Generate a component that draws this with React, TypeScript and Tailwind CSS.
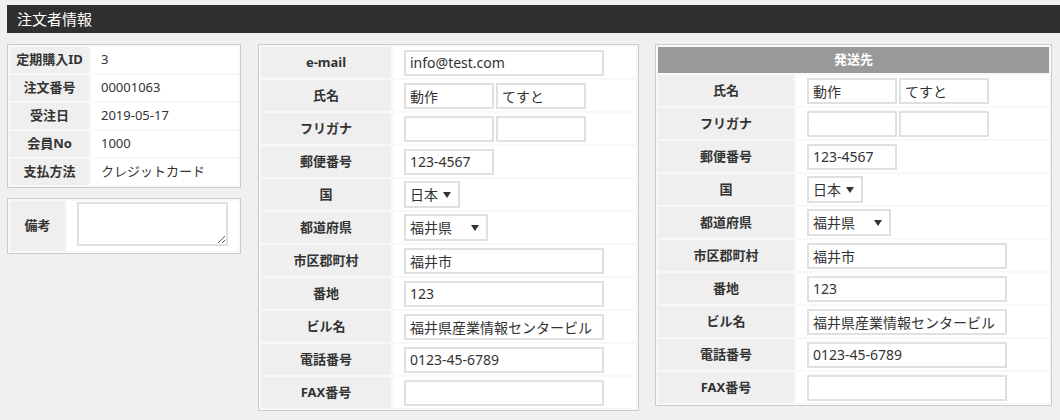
import React from "react";

const F = "font-['Noto_Sans','Noto_Sans_CJK_JP',sans-serif]";

function Inp({ w, v = "" }: { w: string; v?: string }) {
  return (
    <input
      readOnly
      defaultValue={v}
      className={`h-[26px] border-2 border-[#e0e0e0] bg-white px-[4px] text-[14px] text-[#333] outline-none ${F} ${w}`}
    />
  );
}

function Sel({ w, v }: { w: string; v: string }) {
  return (
    <div
      className={`flex h-[27px] items-center justify-between border-2 border-[#e0e0e0] bg-white pl-[4px] pr-[7px] text-[14px] text-[#333] ${w}`}
    >
      <span>{v}</span>
      <svg width="8" height="6" viewBox="0 0 8 6">
        <path d="M0 0 L8 0 L4 6 Z" fill="#333" />
      </svg>
    </div>
  );
}

type Row = { label: string; content: React.ReactNode };

const pair = (a: string, b: string) => (
  <div className="flex gap-[2px]">
    <Inp w="w-[90px]" v={a} />
    <Inp w="w-[90px]" v={b} />
  </div>
);

const baseRows: Row[] = [
  { label: "氏名", content: pair("動作", "てすと") },
  { label: "フリガナ", content: pair("", "") },
  { label: "郵便番号", content: <Inp w="w-[90px]" v="123-4567" /> },
  { label: "国", content: <Sel w="w-[56px]" v="日本" /> },
  { label: "都道府県", content: <Sel w="w-[84px]" v="福井県" /> },
  { label: "市区郡町村", content: <Inp w="w-[200px]" v="福井市" /> },
  { label: "番地", content: <Inp w="w-[200px]" v="123" /> },
  { label: "ビル名", content: <Inp w="w-[200px]" v="福井県産業情報センタービル" /> },
  { label: "電話番号", content: <Inp w="w-[200px]" v="0123-45-6789" /> },
  { label: "FAX番号", content: <Inp w="w-[200px]" v="" /> },
];

const midRows: Row[] = [
  { label: "e-mail", content: <Inp w="w-[200px]" v="info@test.com" /> },
  ...baseRows,
];

const info: [string, string][] = [
  ["定期購入ID", "3"],
  ["注文番号", "00001063"],
  ["受注日", "2019-05-17"],
  ["会員No", "1000"],
  ["支払方法", "クレジットカード"],
];

export default function App() {
  return (
    <div className={`min-h-[420px] w-[1060px] overflow-hidden bg-[#f0f0f0] pt-[5px] ${F} text-[#333]`}>
      <div className="ml-[7px] h-[28px] bg-[#303030] pl-[10px] text-[15px] leading-[28px] text-white">
        注文者情報
      </div>
      <div className="mt-[11px] flex items-start pl-[7px]">
        {/* Left column */}
        <div className="flex w-[234px] flex-col gap-[10px]">
          <div className="border border-[#cccccc] bg-[#f8f8f8]">
            <table className="w-full border-separate border-spacing-[2px]">
              <tbody>
                {info.map(([l, v]) => (
                  <tr key={l}>
                    <td className="h-[26px] w-[79px] bg-[#efefef] p-0 text-center text-[13px] font-bold">
                      {l}
                    </td>
                    <td className="h-[26px] bg-white p-0 pl-[10px] text-[13px]">{v}</td>
                  </tr>
                ))}
              </tbody>
            </table>
          </div>
          <div className="border border-[#cccccc] bg-[#f8f8f8]">
            <table className="w-full border-separate border-spacing-[2px]">
              <tbody>
                <tr>
                  <td className="h-[50px] w-[55px] bg-[#efefef] p-0 text-center text-[13px] font-bold">
                    備考
                  </td>
                  <td className="h-[50px] bg-white p-0 pl-[10px] align-top">
                    <textarea
                      readOnly
                      className="mt-[1px] block h-[44px] w-[151px] border-2 border-[#e0e0e0] bg-white outline-none"
                    />
                  </td>
                </tr>
              </tbody>
            </table>
          </div>
        </div>

        {/* Middle */}
        <div className="ml-[17px] w-[381px] border border-[#cccccc] bg-[#f8f8f8]">
          <table className="w-full border-separate border-spacing-[2px]">
            <tbody>
              {midRows.map((r) => (
                <tr key={r.label}>
                  <td className="h-[31px] w-[130px] bg-[#efefef] p-0 text-center text-[13px] font-bold">
                    {r.label}
                  </td>
                  <td className="h-[31px] bg-white p-0 pl-[11px]">{r.content}</td>
                </tr>
              ))}
            </tbody>
          </table>
        </div>

        {/* Right */}
        <div className="ml-[16px] w-[397px] border border-[#cccccc] bg-[#f8f8f8]">
          <table className="w-full border-separate border-spacing-[2px]">
            <tbody>
              <tr>
                <td
                  colSpan={2}
                  className="h-[26px] bg-[#999999] p-0 text-center text-[13px] font-bold text-white"
                >
                  発送先
                </td>
              </tr>
              {baseRows.map((r) => (
                <tr key={r.label}>
                  <td className="h-[31px] w-[136px] bg-[#efefef] p-0 text-center text-[13px] font-bold">
                    {r.label}
                  </td>
                  <td className="h-[31px] bg-white p-0 pl-[11px]">{r.content}</td>
                </tr>
              ))}
            </tbody>
          </table>
        </div>
      </div>
    </div>
  );
}
